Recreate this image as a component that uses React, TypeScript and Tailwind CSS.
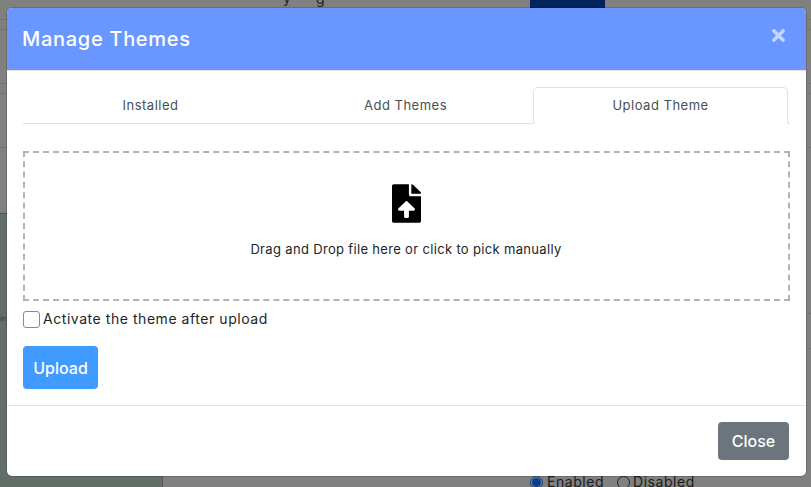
import { FaTimes } from "react-icons/fa";

const font = { fontFamily: '"Inter", "Open Sans", sans-serif' };

// faint row lines of the page under the backdrop
const leftLines = [19, 29, 83, 93, 147];
const rightLines = [19, 29, 83, 93, 147, 313, 348];

export default function App() {
  return (
    <div
      style={font}
      className="relative h-[487px] w-[811px] overflow-hidden bg-[#808080] text-[#212529]"
    >
      {/* page behind the backdrop */}
      {leftLines.map((y) => (
        <div key={y} style={{ top: y }} className="absolute left-0 h-px w-[8px] bg-[#727272]" />
      ))}
      {rightLines.map((y) => (
        <div key={y} style={{ top: y }} className="absolute right-0 h-px w-[6px] bg-[#727272]" />
      ))}
      <div className="absolute left-0 top-[213px] h-[274px] w-[163px] border-r border-t border-[#555] bg-[#646e68]" />
      <span className="absolute left-0 top-[314px] text-[7px] leading-[10px] text-[#333]">in</span>
      <span className="absolute left-[283px] top-[-12px] text-sm tracking-[0.5px] text-[#222]">y</span>
      <span className="absolute left-[316px] top-[-11px] text-sm text-[#222]">g</span>
      <div className="absolute left-[530px] top-0 h-[8px] w-[75px] bg-[#02245b]" />
      <div className="absolute left-[530px] top-[473px] flex items-center text-sm leading-[18px] tracking-[0.55px] text-[#1c1c1c]">
        <span className="flex h-[13px] w-[13px] items-center justify-center rounded-full border border-[#0b3f8a]">
          <span className="h-[9px] w-[9px] rounded-full bg-[#0b3f8a]" />
        </span>
        <span className="ml-[4px] w-[70px]">Enabled</span>
        <span className="h-[13px] w-[13px] rounded-full border border-[#222]" />
        <span className="ml-[3px]">Disabled</span>
      </div>

      {/* modal */}
      <div className="absolute left-[7px] top-[8px] flex h-[468px] w-[799px] flex-col overflow-hidden rounded-[5px] bg-white shadow-[0_0_0_1px_rgba(0,0,0,0.15)]">
        <div className="flex h-[63px] items-center justify-between border-b border-[#e4e4e4] bg-[#6997ff] pl-[15px] pr-[18px]">
          <span className="text-[20px] font-medium tracking-[0.7px] text-white">Manage Themes</span>
          <FaTimes className="mb-[7px] text-[#c4d6ff]" size={19} />
        </div>

        <div className="flex flex-1 flex-col px-4 pt-[16px]">
          <div className="flex h-[37px] border-b border-[#dee2e6] text-[13px] tracking-[0.5px] text-[#495057]">
            <div className="flex w-[255px] items-center justify-center pt-[1px]">Installed</div>
            <div className="flex w-[255px] items-center justify-center pt-[1px]">Add Themes</div>
            <div className="flex h-[37px] w-[255px] items-center justify-center rounded-t-[5px] border border-[#dee2e6] border-b-white bg-white pt-[1px]">
              Upload Theme
            </div>
          </div>

          <div className="mt-[27px] flex h-[150px] flex-col items-center border-2 border-dashed border-[#b3b3b3] pt-[31px]">
            <svg viewBox="0 0 384 512" className="mr-[1px] h-[39px] w-[29px]" fill="#000">
              <path d="M224 136V0H24C10.700 0 0 10.700 0 24v464c0 13.300 10.700 24 24 24h336c13.300 0 24-10.700 24-24V160H248c-13.200 0-24-10.800-24-24zm65.180 215.010H224v80c0 8.840-7.160 16-16 16h-32c-8.840 0-16-7.160-16-16v-80H94.820c-14.280 0-21.410-17.290-11.270-27.360l96.420-95.700c6.650-6.610 17.390-6.610 24.040 0l96.420 95.700c10.150 10.070 3.030 27.360-11.250 27.360zM377 105L279.100 7c-4.500-4.500-10.600-7-17-7H256v128h128v-6.100c0-6.300-2.500-12.400-7-16.900z" />
            </svg>
            <span className="mr-[1px] mt-[17px] text-[13px] tracking-[0.33px]">
              Drag and Drop file here or click to pick manually
            </span>
          </div>

          <div className="mt-[8px] flex items-center gap-[3px] text-sm tracking-[0.55px]">
            <span className="h-[17px] w-[17px] rounded-[3px] border border-[#8a8a8a] bg-white" />
            <span>Activate the theme after upload</span>
          </div>

          <button className="mt-[17px] h-[43px] w-[75px] rounded-[4px] bg-[#3f9bff] text-base font-medium text-white">
            Upload
          </button>
        </div>

        <div className="flex h-[71px] items-start justify-end border-t border-[#dee2e6] pr-[17px] pt-[16px]">
          <button className="h-[38px] w-[71px] rounded-[4px] bg-[#6c757d] text-base font-medium text-white">
            Close
          </button>
        </div>
      </div>
    </div>
  );
}
